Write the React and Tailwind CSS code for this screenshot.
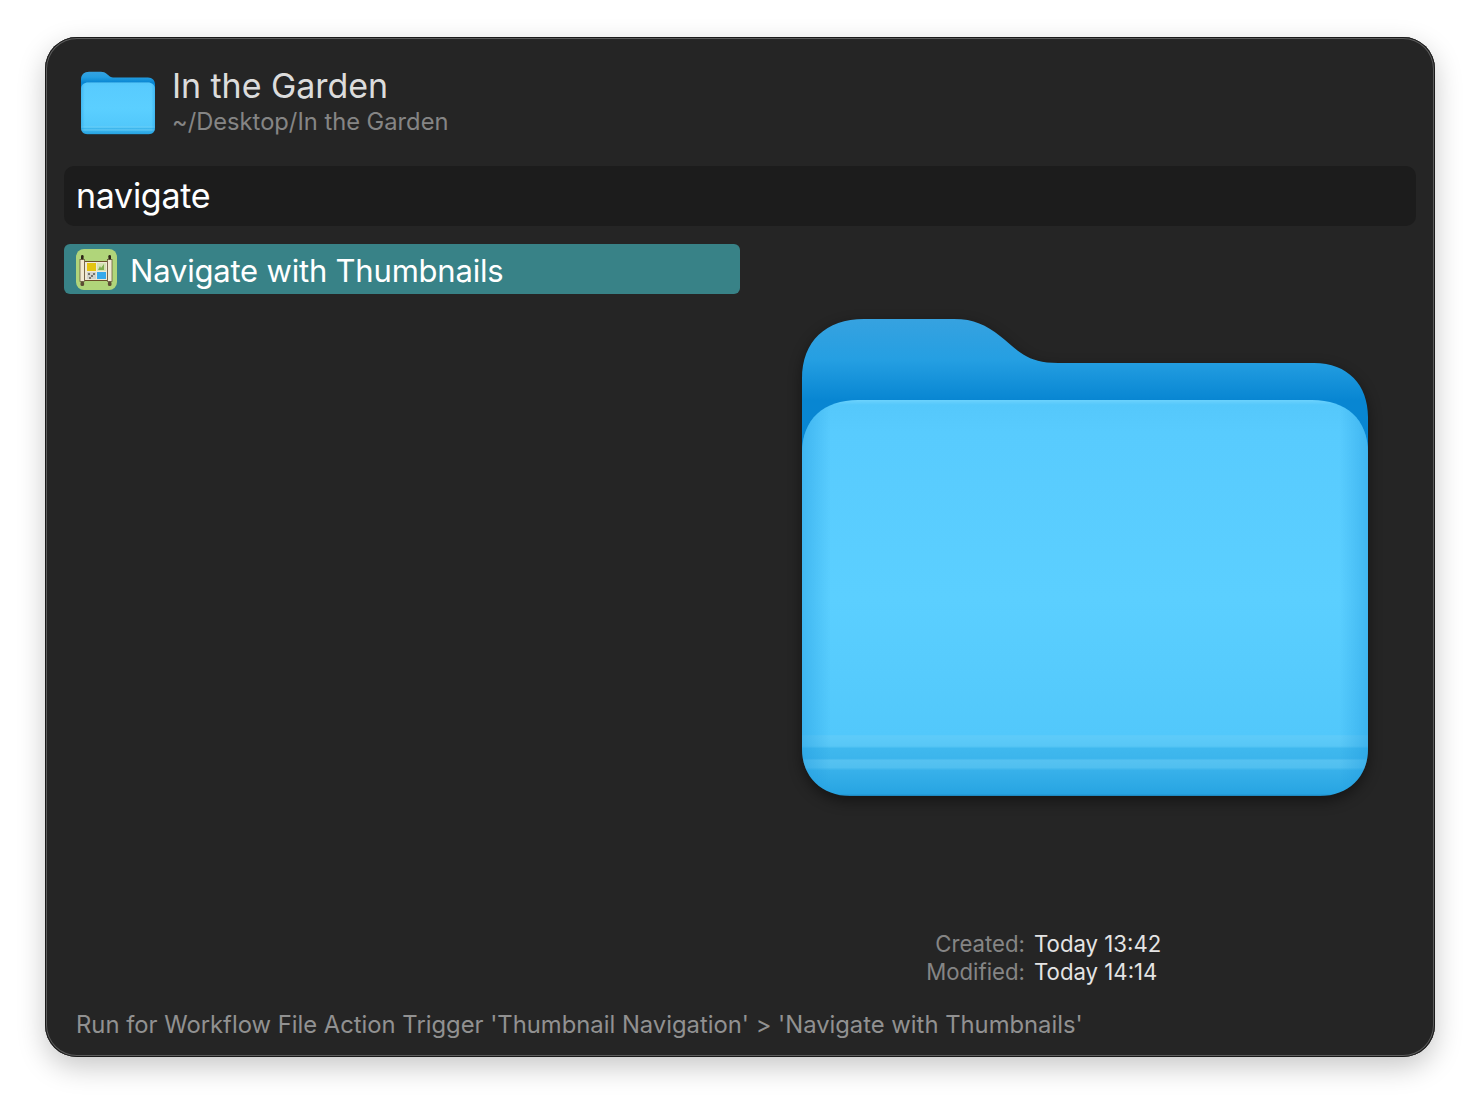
function Folder({ id, className }) {
  const front = "M0 134C0 100 22 81 56 81H510C544 81 566 100 566 134V430C566 458 546 477 518 477H48C20 477 0 458 0 430Z";
  return (
    <svg viewBox="0 0 566 477" className={className}>
      <defs>
        <linearGradient id={id + "b"} x1="0" y1="0" x2="0" y2="81" gradientUnits="userSpaceOnUse">
          <stop offset="0" stopColor="#36a2e0" />
          <stop offset="0.5" stopColor="#259fe2" />
          <stop offset="1" stopColor="#0886d2" />
        </linearGradient>
        <linearGradient id={id + "f"} x1="0" y1="81" x2="0" y2="477" gradientUnits="userSpaceOnUse">
          <stop offset="0" stopColor="#6cd2fd" />
          <stop offset="0.012" stopColor="#55c8fb" />
          <stop offset="0.08" stopColor="#58cbfe" />
          <stop offset="0.5" stopColor="#5bcfff" />
          <stop offset="0.845" stopColor="#52c8fb" />
          <stop offset="0.848" stopColor="#5ecbf9" />
          <stop offset="0.874" stopColor="#58c7f6" />
          <stop offset="0.88" stopColor="#3fb8ee" />
          <stop offset="0.905" stopColor="#3cb5ec" />
          <stop offset="0.91" stopColor="#56c2f1" />
          <stop offset="0.928" stopColor="#50bff0" />
          <stop offset="0.935" stopColor="#38b1ea" />
          <stop offset="0.995" stopColor="#27a4e2" />
          <stop offset="1" stopColor="#1c82b8" />
        </linearGradient>
        <linearGradient id={id + "e"} x1="0" y1="0" x2="1" y2="0">
          <stop offset="0" stopColor="#1a95dc" stopOpacity="0.4" />
          <stop offset="0.05" stopColor="#1a95dc" stopOpacity="0" />
          <stop offset="0.95" stopColor="#1a95dc" stopOpacity="0" />
          <stop offset="1" stopColor="#1a95dc" stopOpacity="0.4" />
        </linearGradient>
      </defs>
      <path
        d="M0 60C0 22 24 0 62 0H152C172 0 184 6 198 17C216 31 224 44 256 44H512C546 44 566 66 566 98V200H0Z"
        fill={`url(#${id}b)`}
      />
      <path d={front} fill={`url(#${id}f)`} />
      <path d={front} fill={`url(#${id}e)`} />
    </svg>
  );
}

function ScrollIcon() {
  return (
    <svg viewBox="0 0 41 41" className="w-[41px] h-[41px] shrink-0">
      <rect x="0" y="0" width="41" height="41" rx="8" fill="#b0d57a" />
      <rect x="8" y="12" width="24" height="20" fill="#6b4e2a" />
      <rect x="9" y="13" width="22" height="18" fill="#efe9d6" />
      <rect x="11" y="14" width="9" height="8" fill="#e3c411" />
      <rect x="21" y="14" width="9" height="8" fill="#d5e2b4" />
      <path d="M22 21l2-4 1 2 3-4v6h-6z" fill="#7fae50" />
      <rect x="11" y="23" width="9" height="7" fill="#d2d2cc" />
      <path d="M12 24h2v2h-2zM15 26h2v2h-2zM13 28h2v2h-2zM17 24h2v2h-2z" fill="#77756f" />
      <rect x="21" y="23" width="9" height="7" fill="#36a9ec" />
      <rect x="4" y="10.5" width="4.6" height="22" fill="#f2ead2" stroke="#5c4a30" strokeWidth="0.7" />
      <rect x="31.4" y="10.5" width="4.6" height="22" fill="#f2ead2" stroke="#5c4a30" strokeWidth="0.7" />
      <rect x="5" y="6" width="2.6" height="4.5" rx="1.2" fill="#2e2418" />
      <rect x="32.4" y="6" width="2.6" height="4.5" rx="1.2" fill="#2e2418" />
      <rect x="4.5" y="32.5" width="3.6" height="4.5" rx="1.5" fill="#5d4c34" />
      <rect x="31.9" y="32.5" width="3.6" height="4.5" rx="1.5" fill="#5d4c34" />
    </svg>
  );
}

export default function App() {
  return (
    <div className="w-[1480px] h-[1110px] bg-white pt-[37px] pl-[45px] overflow-hidden font-['Inter','Liberation_Sans',sans-serif]">
      <div className="w-[1390px] h-[1020px] rounded-[32px] bg-[#252525] flex flex-col px-[19px] shadow-[inset_0_0_0_1px_#1a1a1a,inset_0_0_0_2px_#5c5c5c,0_10px_28px_rgba(0,0,0,0.22)]">
        <div className="h-[129px] flex items-start shrink-0 pt-[34px] pl-[17px]">
          <Folder id="s" className="w-[74px] h-[64px] shrink-0" />
          <div className="ml-[17px] flex flex-col -mt-[6px]">
            <span className="text-[34px] leading-[42px] text-[#dcdcdc] tracking-[-0.07px]">In the Garden</span>
            <span className="text-[23.7px] leading-[30px] text-[#858585]">~/Desktop/In the Garden</span>
          </div>
        </div>
        <div className="h-[60px] shrink-0 rounded-[10px] bg-[#1c1c1c] flex items-center px-[12px]">
          <span className="text-[34px] text-white tracking-[-0.3px] -mt-[1px]">navigate</span>
        </div>
        <div className="flex-1 flex min-h-0 pt-[18px]">
          <div className="w-[676px] shrink-0">
            <div className="h-[50px] rounded-[6px] bg-[#388287] flex items-center pl-[12px]">
              <ScrollIcon />
              <span className="ml-[13px] mt-[4px] text-[31px] text-white tracking-[-0.2px]">Navigate with Thumbnails</span>
            </div>
          </div>
          <div className="flex-1 flex flex-col pl-[62px]">
            <Folder id="l" className="w-[566px] h-[477px] mt-[75px] drop-shadow-[0_5px_7px_rgba(0,0,0,0.45)] shrink-0" />
            <div className="mt-[134px] grid grid-cols-[223px_1fr] gap-x-[9px] text-[22.2px] leading-[28px]">
              <span className="text-right text-[#858585]">Created:</span>
              <span className="text-[#e4e4e4]">Today 13:42</span>
              <span className="text-right text-[#858585]">Modified:</span>
              <span className="text-[#e4e4e4]">Today 14:14</span>
            </div>
          </div>
        </div>
        <div className="h-[53px] shrink-0 pl-[12px] text-[23.8px] text-[#919191] leading-[30px] pt-[6px]">
          Run for Workflow File Action Trigger 'Thumbnail Navigation' &gt; 'Navigate with Thumbnails'
        </div>
      </div>
    </div>
  );
}
